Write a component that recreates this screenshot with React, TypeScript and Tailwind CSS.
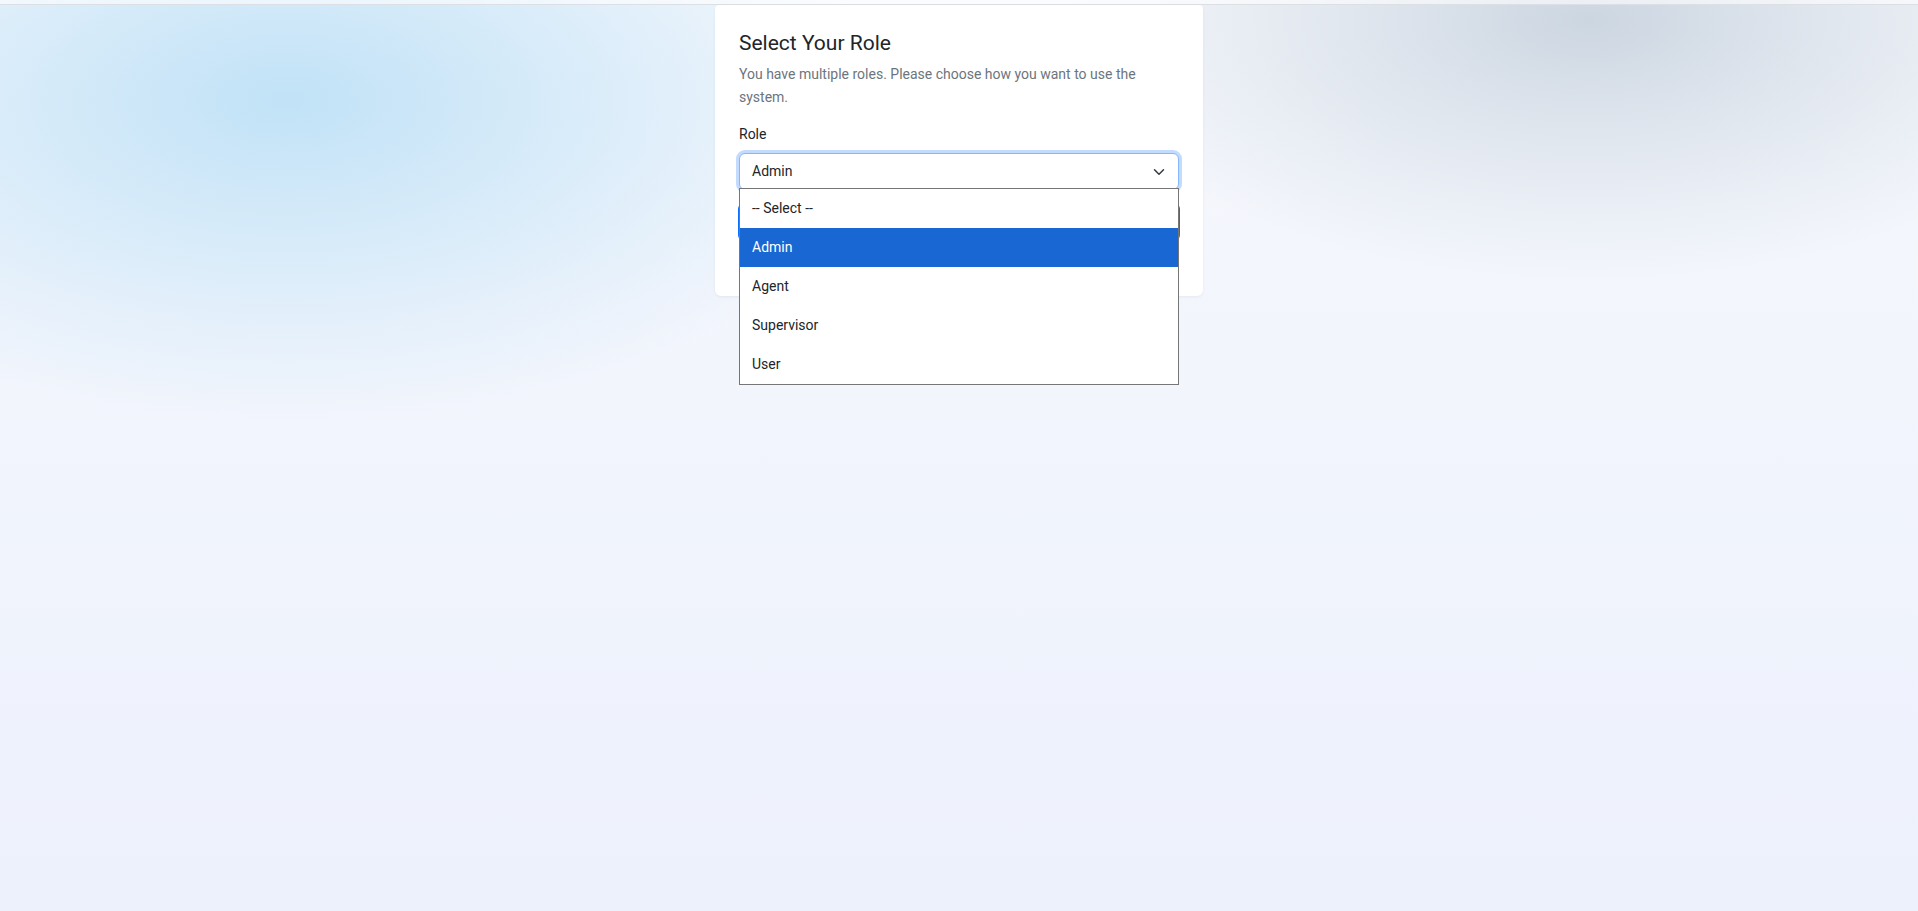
import React from 'react';

const roles = ['-- Select --', 'Admin', 'Agent', 'Supervisor', 'User'];

const Chevron: React.FC = () => (
    <svg width="12" height="12" viewBox="0 0 16 16" fill="none" className="shrink-0">
        <path d="m2 5 6 6 6-6" stroke="#343a40" strokeWidth="2" strokeLinecap="round" strokeLinejoin="round" />
    </svg>
);

const App: React.FC = () => {
    const selected = 'Admin';

    return (
        <div className="min-h-[911px] w-full font-['Roboto',sans-serif] text-[#212529] bg-[radial-gradient(ellipse_620px_320px_at_287px_100px,#c1e2f7_0%,rgba(193,226,247,0.6)_40%,rgba(193,226,247,0)_100%),radial-gradient(ellipse_540px_260px_at_1590px_20px,#ccd6e1_0%,rgba(204,214,225,0.5)_45%,rgba(204,214,225,0)_100%),linear-gradient(to_bottom,#f6f8fc,#edf1fc)]">
            {/* thin top strip */}
            <div className="h-[5px] bg-white/60 border-b border-[#dcdfe3]" />

            <div className="flex justify-center">
                <div className="relative w-[488px] bg-white rounded-b-md rounded-t-sm shadow-[0_1px_3px_rgba(0,0,0,0.06)] px-6 pt-[24px] pb-[25px]">
                    <h1 className="text-[21px] leading-[28px] font-normal text-[#212529]">Select Your Role</h1>
                    <p className="mt-[6px] text-[14px] leading-[23px] text-[#6c757d]">
                        You have multiple roles. Please choose how you want to use the system.
                    </p>

                    <label className="block mt-[15px] text-[14px] leading-[20px] text-[#212529]">Role</label>

                    <div className="relative mt-[9px]">
                        <div className="flex items-center justify-between h-[37px] pl-3 pr-[13px] rounded-md border border-[#86b7fe] bg-white shadow-[0_0_0_3px_rgba(13,110,253,0.25)] text-[14px]">
                            <span>{selected}</span>
                            <Chevron />
                        </div>

                        <button className="mt-[13px] -ml-[1px] w-[calc(100%+2px)] h-[38px] rounded-md bg-[#0d6efd] text-white text-[14px]">
                            Continue
                        </button>

                        <div className="mt-[10px] text-[13px] leading-[20px] text-[#6c757d] pl-[2px]">Sign out</div>

                        {/* open native list */}
                        <ul className="absolute left-0 right-0 top-[35px] z-10 bg-white border border-[#767676] text-[14px]">
                            {roles.map((r) => (
                                <li
                                    key={r}
                                    className={
                                        r === selected
                                            ? 'h-[39px] flex items-center pl-3 bg-[#1967d2] text-white'
                                            : 'h-[39px] flex items-center pl-3 text-[#212529]'
                                    }
                                >
                                    {r}
                                </li>
                            ))}
                        </ul>
                    </div>
                </div>
            </div>
        </div>
    );
};

export default App;
